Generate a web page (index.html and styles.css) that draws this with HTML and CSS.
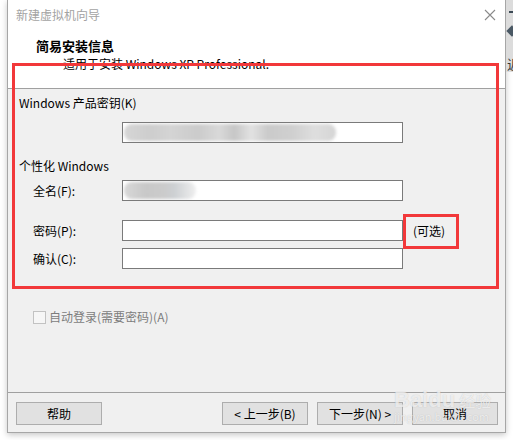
FILE: index.html
```html
<!DOCTYPE html>
<html lang="zh-CN">
<head>
  <meta charset="UTF-8" />
  <title>新建虚拟机向导</title>
  <link rel="stylesheet" href="styles.css">
</head>
<body>
  <div class="page">
    <div class="dialog">
      <div class="titlebar">
        <span class="title">新建虚拟机向导</span>
        <svg class="close" width="12" height="12" viewBox="0 0 12 12">
          <path d="M1 1 L11 11 M11 1 L1 11" stroke="#8a8a8a" stroke-width="1.1" fill="none"/>
        </svg>
      </div>

      <div class="header">
        <div class="header-title">简易安装信息</div>
        <div class="header-sub">适用于安装 Windows XP Professional.</div>
      </div>

      <div class="content">
        <div class="group-label">Windows 产品密钥(K)</div>
        <div class="row row-key">
          <span class="label"></span>
          <div class="field"><span class="smudge smudge-key"></span></div>
        </div>

        <div class="group-label group-gap">个性化 Windows</div>
        <div class="row row-name">
          <span class="label">全名(F):</span>
          <div class="field"><span class="smudge smudge-name"></span></div>
        </div>
        <div class="row row-pass">
          <span class="label">密码(P):</span>
          <div class="field"></div>
          <span class="hint">(可选)</span>
        </div>
        <div class="row row-confirm">
          <span class="label">确认(C):</span>
          <div class="field"></div>
        </div>

        <label class="autologin">
          <span class="checkbox"></span>
          <span>自动登录(需要密码)(A)</span>
        </label>
      </div>

      <div class="footer">
        <button class="btn">帮助</button>
        <div class="nav">
          <button class="btn">&lt; 上一步(B)</button>
          <button class="btn">下一步(N) &gt;</button>
          <button class="btn">取消</button>
        </div>
      </div>

      <!-- annotation boxes drawn over the screenshot -->
      <div class="mark mark-main"></div>
      <div class="mark mark-hint"></div>

      <div class="watermark">
        <span class="wm-logo">Bai<span class="paw">du</span></span><span class="wm-cn">经验</span>
        <span class="wm-url">jingyan.baidu.com</span>
      </div>
    </div>

    <div class="side">
      <div class="side-top">
        <span class="side-dash"></span>
        <span class="side-arrow"></span>
        <span class="side-char">近</span>
      </div>
    </div>
  </div>
</body>
</html>
```

FILE: styles.css
```css
body {
  margin: 0;
  background: #fff;
  font-family: "Noto Sans CJK SC", "Noto Sans", sans-serif;
  font-size: 12px;
  color: #000;
  width: 513px;
  height: 440px;
  overflow: hidden;
}
.page {
  display: flex;
  padding-left: 7px;
}
.dialog {
  position: relative;
  width: 497px;
  height: 432px;
  border: 1px solid #a6a6a6;
  border-top: none;
  background: #f0f0f0;
  box-shadow: 0 2px 6px rgba(0, 0, 0, 0.22);
  display: flex;
  flex-direction: column;
}

/* title bar + header */
.titlebar {
  height: 30px;
  background: #fff;
  display: flex;
  align-items: center;
  justify-content: space-between;
  padding: 0 9px 0 8px;
}
.title {
  color: #a3a3a3;
  line-height: 16px;
  margin-top: -1px;
}
.close {
  margin-top: -1px;
}
.header {
  background: #fff;
  border-bottom: 1px solid #a0a0a0;
  padding: 7px 0 0 28px;
  box-sizing: border-box;
  height: 59px;
}
.header-title {
  font-weight: bold;
  font-size: 13px;
  line-height: 17px;
}
.header-sub {
  line-height: 16px;
  margin: 2px 0 0 27px;
}

/* main area */
.content {
  height: 303px;
  padding: 6px 0 0 11px;
  box-sizing: border-box;
}
.group-label {
  line-height: 16px;
}
.group-gap {
  margin-top: 15px;
}
.row {
  display: flex;
  align-items: center;
  padding-left: 14px;
}
.row-key { margin-top: 11px; }
.row-name { margin-top: 6px; }
.row-pass { margin-top: 19px; }
.row-confirm { margin-top: 7px; }
.label {
  width: 89px;
  line-height: 16px;
}
.field {
  width: 279px;
  height: 19px;
  background: #fff;
  border: 1px solid #7a7a7a;
  overflow: hidden;
  display: flex;
  align-items: center;
}
.hint {
  margin-left: 10px;
  line-height: 16px;
}
.smudge {
  display: block;
  height: 17px;
  margin-left: 1px;
  border-radius: 8px;
  filter: blur(1.5px);
}
.smudge-key {
  width: 212px;
  background: linear-gradient(90deg, #d6d6d6 0%, #cdcdcd 12%, #d4d4d4 22%, #cbcbcb 35%, #d9d9d9 45%, #c6c6c6 52%, #e2e2e2 60%, #cacaca 68%, #d0d0d0 80%, #dedede 90%, #d5d5d5 100%);
}
.smudge-name {
  width: 72px;
  background: linear-gradient(90deg, #d8d8d8 0%, #c8c8c8 30%, #cbcbcb 55%, #cdd0d3 70%, #efefef 100%);
}
.autologin {
  display: flex;
  align-items: center;
  margin: 40px 0 0 14px;
  line-height: 16px;
  color: #7d7d7d;
}
.checkbox {
  width: 11px;
  height: 11px;
  border: 1px solid #c2c2c2;
  background: #f6f6f6;
  margin-right: 3px;
}

/* buttons */
.footer {
  flex: 1;
  border-top: 1px solid #a0a0a0;
  display: flex;
  justify-content: space-between;
  padding: 9px 7px 0 8px;
}
.nav {
  display: flex;
  gap: 9px;
}
.btn {
  width: 86px;
  height: 23px;
  padding: 0;
  background: #e1e1e1;
  border: 1px solid #adadad;
  font-family: "Noto Sans CJK SC", "Noto Sans", sans-serif;
  font-size: 12px;
  color: #000;
}

/* red annotation frames */
.mark {
  position: absolute;
  border: 3px solid #f2383a;
}
.mark-main {
  left: 4px;
  top: 63px;
  width: 481px;
  height: 220px;
}
.mark-hint {
  left: 395px;
  top: 214px;
  width: 50px;
  height: 29px;
}

/* site watermark */
.watermark {
  position: absolute;
  left: 386px;
  top: 388px;
  width: 110px;
  color: rgba(255, 255, 255, 0.7);
  text-shadow: 0 0 1px rgba(120, 120, 120, 0.4);
  pointer-events: none;
}
.wm-logo {
  font-family: "Liberation Sans", sans-serif;
  font-weight: bold;
  font-size: 22px;
  line-height: 24px;
}
.wm-cn {
  font-size: 16px;
  margin-left: 4px;
}
.wm-url {
  display: block;
  font-size: 11px;
  line-height: 12px;
  margin-top: -2px;
}

/* edge of the window behind */
.side {
  flex: 1;
}
.side-top {
  height: 72px;
  background: #dcdcdc;
  position: relative;
  overflow: hidden;
}
.side-dash {
  position: absolute;
  left: 3px;
  top: 11px;
  width: 6px;
  height: 2px;
  background: #3c4a55;
}
.side-arrow {
  position: absolute;
  left: 2px;
  top: 27px;
  width: 8px;
  height: 8px;
  background: #4a5864;
  transform: rotate(45deg);
}
.side-char {
  position: absolute;
  left: 1px;
  top: 57px;
  font-size: 13px;
  line-height: 14px;
  color: #333;
}
```
